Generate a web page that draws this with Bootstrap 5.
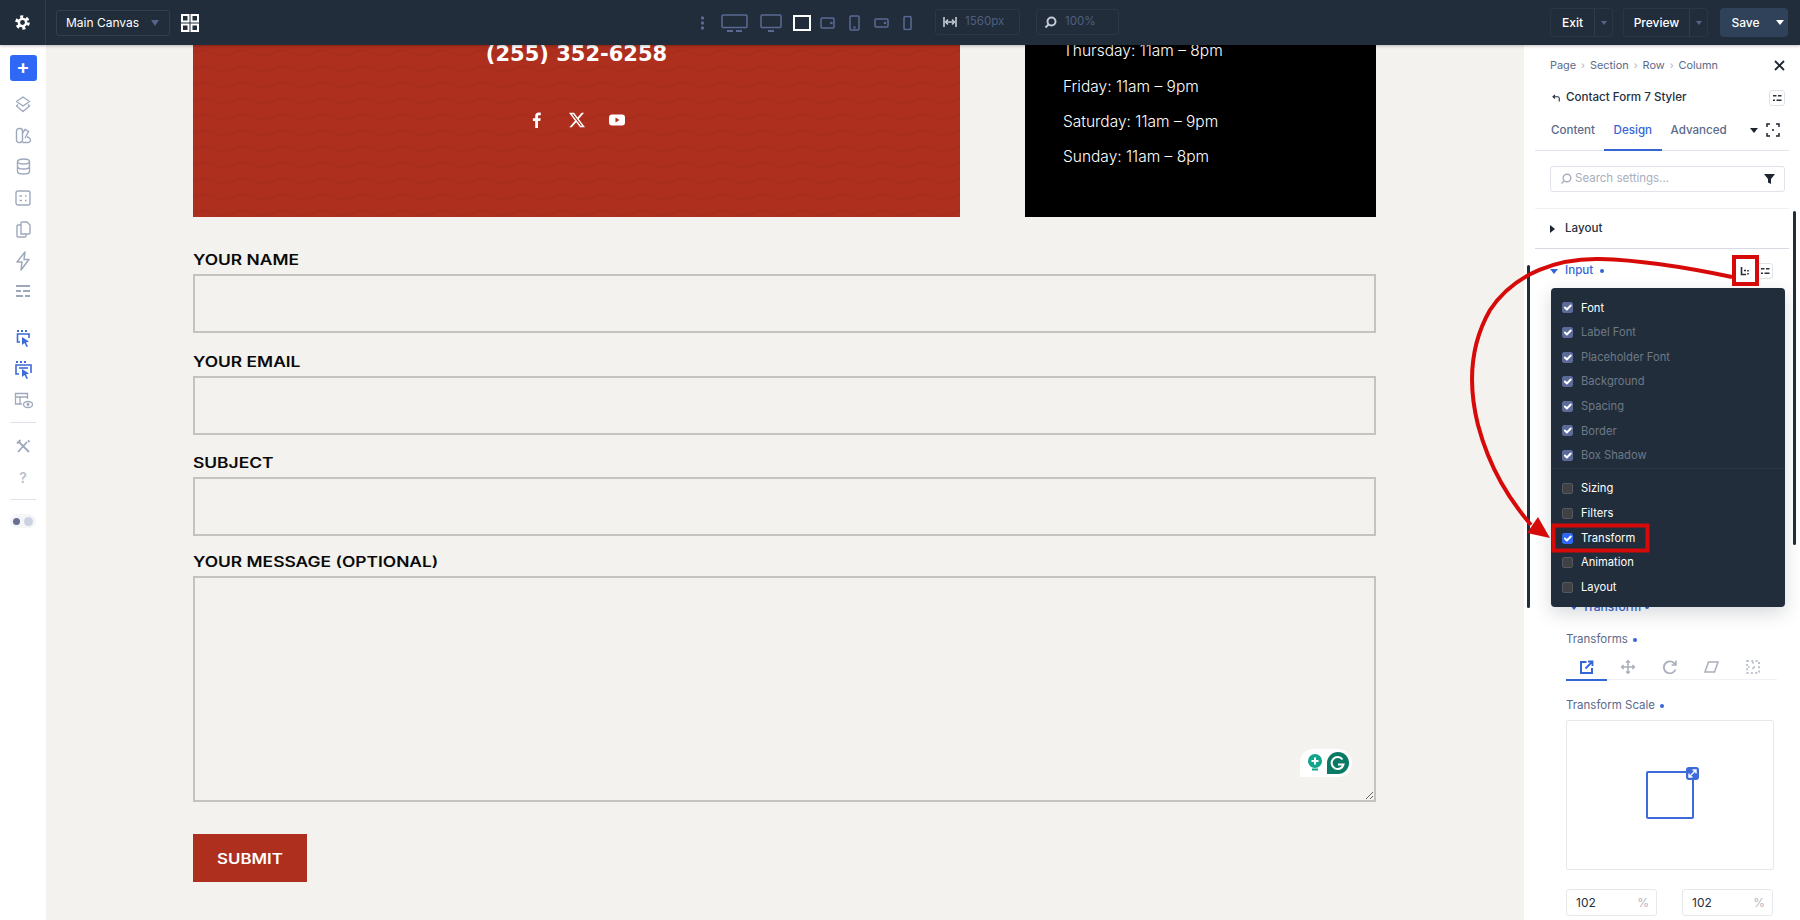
<!DOCTYPE html>
<html lang="en">
<head>
<meta charset="utf-8">
<title>Contact Form 7 Styler</title>
<link href="https://cdn.jsdelivr.net/npm/bootstrap@5.3.0/dist/css/bootstrap.min.css" rel="stylesheet">
<style>
html, body { height: 100%; overflow: hidden; }
body { font-family: Inter, "Liberation Sans", sans-serif; background: #f3f2ee; }
.app-shell { position: relative; width: 1800px; height: 920px; overflow: hidden; }

/* top bar */
.top-bar { height: 45px; background: #212d3a; color: #fff; font-size: 12px; box-shadow: 0 1px 3px rgba(0,0,0,.25); position: relative; z-index: 3; }
.gear-cell { width: 46px; height: 45px; border-right: 1px solid #2f3c4b; }
.canvas-pick { width: 114px; height: 26px; margin-left: 10px; border: 1px solid #333f4f; border-radius: 3px; padding: 0 10px 0 9px; }
.grid-ico { margin-left: 10px; }
.caret-dim { width: 0; height: 0; border-left: 4px solid transparent; border-right: 4px solid transparent; border-top: 6px solid #55648c; }
.caret-small { border-top-width: 4px; border-left-width: 3px; border-right-width: 3px; }
.caret-white { width: 0; height: 0; border-left: 4px solid transparent; border-right: 4px solid transparent; border-top: 5px solid #fff; }
.device-strip { position: absolute; left: 698px; top: 0; height: 45px; color: #5a6a94; }
.device-strip svg { position: absolute; top: 50%; transform: translateY(-50%); }
.stat-box { position: absolute; top: 9px; height: 26px; border: 1px solid #2c3846; border-radius: 3px; color: #4f5f7e; font-size: 11.6px; padding: 0 7px; gap: 8px; }
.stat-box svg { color: #c3cad6; }
.action-group { position: absolute; top: 8px; height: 29px; border: 1px solid #2a3644; border-radius: 3px; font-weight: 500; }
.action-main { height: 100%; display: flex; align-items: center; justify-content: center; border-right: 1px solid #2f3c4b; }
.action-arrow { width: 17px; height: 100%; display: flex; align-items: center; justify-content: center; }
.save-group { background: #30425a; border: 0; border-radius: 4px; }
.save-group .action-main { border: 0; }

/* left rail */
.rail-col { width: 46px; background: #fff; color: #9ea8bd; padding-top: 10px; }
.add-btn { width: 27px; height: 26px; margin: 0 auto 7.5px; background: #2e68f5; border-radius: 3px; color: #fff; font-size: 20px; font-weight: 600; line-height: 24px; text-align: center; }
.rail-item { height: 31.3px; display: flex; align-items: center; justify-content: center; }
.rail-blue { color: #3c6ad8; }
.rail-line { height: 1px; width: 26px; margin: 6px auto 7px; background: #dfe2e8; }
.rail-gap { height: 15px; }
.rail-help { font-size: 14px; font-weight: 600; color: #b8bfcc; }
.mode-pill { width: 26px; height: 14px; border-radius: 7px; background: #f4f5f8; margin: 14px auto 0 10px; gap: 4px; padding: 0 3px; }
.mode-dot { width: 7px; height: 7px; border-radius: 50%; background: #67718f; }
.mode-dot-light { width: 9px; height: 9px; border-radius: 50%; background: #ccd2e2; }

/* canvas */
.canvas-area { width: 1478px; padding-left: 147px; background: #f3f2ee; overflow: hidden; }
.hero-row { width: 1183px; height: 172px; gap: 65px; }
.hero-red { position: relative; width: 767px; background: #ae2f1e; color: #fff; overflow: hidden; }
.hero-waves { position: absolute; inset: 0; width: 100%; height: 100%; }
.hero-phone { position: relative; font-family: "DejaVu Sans", sans-serif; font-weight: 700; font-size: 21px; line-height: 18px; text-align: center; }
.hero-social { position: relative; margin-top: 49px; gap: 24px; }
.hero-hours { width: 351px; background: #000; color: #fff; padding-left: 38px; font-size: 15.500px; font-weight: 300; line-height: 24px; }
.hero-hours p { margin: 0 0 11px; }
.hero-hours p:first-child { line-height: 12px; margin-bottom: 18px; }
.contact-form { width: 1183px; padding-top: 34px; }
.field-label { display: block; height: 23px; margin: 0; font-family: Inter, sans-serif; font-weight: 600; font-size: 13.800px; line-height: 18px; color: #0a0a0a; transform: scaleX(1.260); transform-origin: left center; white-space: nowrap; }
.field-input { height: 59px; border: 2px solid #c4c3bd; border-radius: 0; background: #f3f2ee; margin-bottom: 19.500px; }
.field-input.form-control:focus { background: #f3f2ee; border-color: #c4c3bd; box-shadow: none; }
.field-tight { margin-bottom: 16.500px; }
textarea.field-input { height: 226px; margin-bottom: 32px; resize: both; }
.message-wrap { position: relative; }
.grammarly-pill { position: absolute; left: 1107px; top: 173px; width: 52px; height: 28px; background: #fff; border-radius: 13px 14px 14px 0; gap: 4px; padding: 0 2px 0 7px; }
.submit-btn { width: 114px; height: 48px; background: #ae2f1e; border: 0; border-radius: 0; color: #fff; padding: 0; }
.submit-btn span { display: inline-block; font-family: Inter, sans-serif; font-weight: 600; font-size: 13.800px; transform: scaleX(1.220); }
.submit-btn:hover { background: #ae2f1e; color: #fff; }

/* settings panel */
.settings-panel { position: relative; width: 276px; background: #fff; padding: 0 11px; overflow: hidden; font-size: 12px; color: #5b6a8a; }
.crumb-row { height: 41px; padding: 0 0 1px 15px; gap: 5px; font-size: 10.900px; }
.crumb-sep { color: #a9b1c2; font-size: 10px; }
.title-row { height: 24px; padding-left: 17px; font-size: 11.600px; font-weight: 500; color: #26303d; }
.back-ico { margin-right: 6px; }
.mini-btn { width: 16px; height: 16px; border: 1px solid #dfe2e8; border-radius: 3px; background: #fff; color: #26303d; }
.tab-row { height: 41px; border-bottom: 1px solid #dfe3ea; padding-left: 7px; font-weight: 500; font-size: 11.600px; position: relative; }
.tab-item { padding: 0 9px; height: 100%; display: flex; align-items: center; margin-top: 1px; }
.tab-on { color: #3566d6; position: relative; padding: 0 9.500px; }
.tab-on::after { content: ""; position: absolute; left: 0; right: 0; bottom: 0; height: 2px; background: #3566d6; }
.search-row { height: 26px; margin: 15px 4px 16px 15px; border: 1px solid #dfe3ea; border-radius: 3px; padding: 0 9px; color: #a8afbd; font-size: 11.500px; gap: 3px; }
.sect-row { height: 41px; border-top: 1px solid #eef0f3; border-bottom: 1px solid #d6dae1; padding-left: 15px; font-weight: 500; color: #26303d; font-size: 11.600px; gap: 10px; }
.sect-input { height: 44px; padding-left: 15px; color: #3566d6; font-weight: 500; font-size: 11.600px; gap: 7px; }
.tri-right { width: 0; height: 0; border-top: 4px solid transparent; border-bottom: 4px solid transparent; border-left: 5px solid #1c2530; }
.tri-down { width: 0; height: 0; border-left: 4px solid transparent; border-right: 4px solid transparent; border-top: 5px solid #3566d6; }
.blue-dot { width: 4px; height: 4px; border-radius: 50%; background: #3566d6; display: inline-block; }
.hidden-fill { height: 303px; }
.sub-sect { height: 22px; padding-left: 35px; color: #3566d6; font-weight: 500; gap: 4px; }
.opt-label { height: 30px; padding: 12px 0 0 31px; line-height: 18px; gap: 5px; font-size: 11.500px; }
.opt-label .blue-dot { margin-top: 8px; }
.opt-scale { padding-top: 16px; height: 39px; }
.icon-tabs { margin: 5px 12px 0 31px; height: 27px; border-bottom: 1px solid #eef0f3; color: #a9afbb; }
.icon-cell { width: 41.600px; height: 27px; display: flex; align-items: center; justify-content: center; }
.icon-cell-on { color: #3566d6; position: relative; }
.icon-cell-on::after { content: ""; position: absolute; left: 0; right: 1px; bottom: -1px; height: 2px; background: #3566d6; }
.scale-box { position: relative; height: 150px; margin: 1px 15px 0 31px; border: 1px solid #e6e8ec; border-radius: 2px; }
.scale-square { position: absolute; left: 79px; top: 50px; width: 48px; height: 48px; border: 2px solid #3c6ad8; border-radius: 2px; }
.scale-handle { position: absolute; right: -7px; top: -6px; width: 13px; height: 13px; background: #3c6ad8; border-radius: 3px; }
.num-row { margin: 19px 15px 0 31px; gap: 25px; }
.num-field { width: 91px; height: 27px; border: 1px solid #e6e8ec; border-radius: 3px; padding: 0 7px 0 9px; color: #26303d; }
.num-unit { color: #b0b6c2; }
.pick-menu { position: absolute; left: 27px; top: 243px; width: 234px; height: 319px; background: #212d3a; border-radius: 4px; padding: 7.700px 0 0 11px; box-shadow: 0 6px 18px rgba(33,45,58,.18); font-size: 11.200px; color: #fff; z-index: 2; }
.pick-item { height: 24.600px; display: flex; align-items: center; gap: 8px; }
.pick-item .form-check-input { width: 11px; height: 11px; margin: 0; border-radius: 2px; border: 1px solid #55585e; background-color: #3f4144; background-size: 13px; flex: none; }
.pick-item .form-check-input:checked { background-color: #5b6a98; border-color: #5b6a98; }
.pick-item .form-check-input.pick-active:checked { background-color: #2e68f5; border-color: #2e68f5; }
.pick-dim { color: #6e7987; }
.pick-line { height: 1px; background: #2b3745; margin: 0 0 7.700px -11px; }
.scroll-mark { position: absolute; width: 3px; background: #212d3a; border-radius: 2px; }
.scroll-left { left: 3px; top: 220px; height: 343px; }
.scroll-right { left: 269px; top: 166px; height: 334px; }
.note-layer { position: absolute; left: 0; top: 0; z-index: 5; pointer-events: none; }
</style>
</head>
<body>
<div class="app-shell d-flex flex-column">

  <!-- Top bar -->
  <div class="top-bar d-flex align-items-center flex-shrink-0">
    <div class="gear-cell d-flex align-items-center justify-content-center">
      <svg width="15" height="15" viewBox="0 0 16 16"><circle cx="8" cy="8" r="6.200" fill="none" stroke="#fff" stroke-width="3.200" stroke-dasharray="3.200 3.300"/><circle cx="8" cy="8" r="3.900" fill="none" stroke="#fff" stroke-width="2.600"/></svg>
    </div>
    <div class="canvas-pick d-flex align-items-center justify-content-between">
      <span>Main Canvas</span><span class="caret-dim"></span>
    </div>
    <svg class="grid-ico" width="20" height="20" viewBox="0 0 20 20" fill="none" stroke="#fff" stroke-width="2"><rect x="2" y="2" width="6.500" height="6.500"/><rect x="11.500" y="2" width="6.500" height="6.500"/><rect x="2" y="11.500" width="6.500" height="6.500"/><rect x="11.500" y="11.500" width="6.500" height="6.500"/></svg>

    <div class="device-strip">
      <svg style="left:2px" width="5" height="15" viewBox="0 0 5 15" fill="currentColor"><circle cx="2.500" cy="2.500" r="1.700"/><circle cx="2.500" cy="7.500" r="1.700"/><circle cx="2.500" cy="12.500" r="1.700"/></svg>
      <svg style="left:23px" width="27" height="18" viewBox="0 0 27 18" fill="none" stroke="currentColor" stroke-width="1.500"><rect x="1" y="1" width="25" height="12.500" rx="1"/><path d="M6 17h6M15 17h6" stroke-width="2"/></svg>
      <svg style="left:62px" width="22" height="18" viewBox="0 0 22 18" fill="none" stroke="currentColor" stroke-width="1.500"><rect x="1" y="1" width="20" height="12.500" rx="1"/><path d="M8 17h6" stroke-width="2"/></svg>
      <svg style="left:95px" width="18" height="16" viewBox="0 0 18 16" fill="none" stroke="#fff" stroke-width="2"><rect x="1" y="1" width="16" height="14"/></svg>
      <svg style="left:122px" width="15" height="12" viewBox="0 0 15 12" fill="none" stroke="currentColor" stroke-width="1.500"><rect x="1" y="1" width="13" height="10" rx="1"/><circle cx="11.400" cy="6" r=".6"/></svg>
      <svg style="left:151px" width="11" height="16" viewBox="0 0 11 16" fill="none" stroke="currentColor" stroke-width="1.500"><rect x="1" y="1" width="9" height="14" rx="1"/><circle cx="5.500" cy="12.500" r=".5"/></svg>
      <svg style="left:176px" width="15" height="10" viewBox="0 0 15 10" fill="none" stroke="currentColor" stroke-width="1.500"><rect x="1" y="1" width="13" height="8" rx="1"/><circle cx="11" cy="5" r=".6"/></svg>
      <svg style="left:205px" width="9" height="15" viewBox="0 0 9 15" fill="none" stroke="currentColor" stroke-width="1.500"><rect x="1" y="1" width="7" height="13" rx="1"/></svg>
    </div>

    <div class="stat-box d-flex align-items-center" style="left:935px;width:85px">
      <svg width="14" height="12" viewBox="0 0 14 12" fill="none" stroke="currentColor" stroke-width="1.600"><path d="M1 1v10M13 1v10M3 6h8"/><path d="M5 3.500 2.600 6 5 8.500M9 3.500 11.400 6 9 8.500"/></svg>
      <span>1560px</span>
    </div>
    <div class="stat-box d-flex align-items-center" style="left:1036px;width:83px">
      <svg width="13" height="13" viewBox="0 0 13 13" fill="none" stroke="currentColor" stroke-width="2"><circle cx="7.500" cy="5.500" r="4"/><path d="M4.500 8.500 1.500 11.500"/></svg>
      <span>100%</span>
    </div>

    <div class="action-group d-flex" style="left:1550px;width:63px">
      <span class="action-main flex-grow-1">Exit</span>
      <span class="action-arrow"><span class="caret-dim caret-small"></span></span>
    </div>
    <div class="action-group d-flex" style="left:1623px;width:85px">
      <span class="action-main flex-grow-1">Preview</span>
      <span class="action-arrow"><span class="caret-dim caret-small"></span></span>
    </div>
    <div class="action-group save-group d-flex" style="left:1720px;width:68px">
      <span class="action-main flex-grow-1">Save</span>
      <span class="action-arrow"><span class="caret-white"></span></span>
    </div>
  </div>

  <div class="d-flex flex-grow-1" style="min-height:0">

    <!-- Left rail -->
    <div class="rail-col flex-shrink-0">
      <div class="add-btn">+</div>
      <div class="rail-item"><svg width="16" height="17" viewBox="0 0 16 17" fill="none" stroke="currentColor" stroke-width="1.400" stroke-linejoin="round"><path d="M8 1 14.500 5.500 8 10 1.500 5.500z"/><path d="M3 8.500 1.500 10 8 15.500 14.500 10 13 8.500"/></svg></div>
      <div class="rail-item"><svg width="17" height="17" viewBox="0 0 17 17" fill="none" stroke="currentColor" stroke-width="1.400"><rect x="1.500" y="1.500" width="6" height="14" rx="2.500"/><path d="M7.500 6 10 2.500l3.500 2-3.500 6.500"/><path d="M7.500 15.500H13a2.500 2.500 0 0 0 2.500-2.500c0-1.500-2-3-3.500-3"/></svg></div>
      <div class="rail-item"><svg width="15" height="17" viewBox="0 0 15 17" fill="none" stroke="currentColor" stroke-width="1.400"><ellipse cx="7.500" cy="3.500" rx="6" ry="2.500"/><path d="M1.500 3.500v10c0 1.400 2.700 2.500 6 2.500s6-1.100 6-2.500v-10M1.500 8.500c0 1.400 2.700 2.500 6 2.500s6-1.100 6-2.500"/></svg></div>
      <div class="rail-item"><svg width="16" height="16" viewBox="0 0 16 16" fill="none" stroke="currentColor" stroke-width="1.400"><rect x="1" y="1" width="14" height="14" rx="2"/><path d="M4.500 6h2.500M4.500 10.500h2.500M10 6h1.500M10 10.500h1.500"/></svg></div>
      <div class="rail-item"><svg width="15" height="17" viewBox="0 0 15 17" fill="none" stroke="currentColor" stroke-width="1.400"><path d="M5 3V2a1 1 0 0 1 1-1h5l3 3v8a1 1 0 0 1-1 1H5z"/><path d="M5 4H2a1 1 0 0 0-1 1v10a1 1 0 0 0 1 1h7a1 1 0 0 0 1-1v-2"/></svg></div>
      <div class="rail-item"><svg width="14" height="20" viewBox="0 0 14 20" fill="none" stroke="currentColor" stroke-width="1.500" stroke-linejoin="round"><path d="M9 1 1 11h5l-1 8 8-10.500H8z"/></svg></div>
      <div class="rail-item"><svg width="14" height="13" viewBox="0 0 14 13" fill="currentColor"><rect width="14" height="2"/><rect y="5" width="5" height="2"/><rect x="7" y="5" width="7" height="2"/><rect y="10" width="7" height="2"/><rect x="9" y="10" width="5" height="2"/></svg></div>
      <div class="rail-gap"></div>
      <div class="rail-item rail-blue"><svg width="15" height="19" viewBox="0 0 15 19" fill="none" stroke="currentColor" stroke-width="1.600"><path d="M1 2h2M5 2h2M9 2h2" stroke-width="2"/><path d="M4 13H1.500V5h11.500v4"/><path d="M6 8l7 4.500-3 1 2 4-1.500.5-2-4-2.500 2z" fill="currentColor" stroke="none"/></svg></div>
      <div class="rail-item rail-blue"><svg width="17" height="19" viewBox="0 0 17 19" fill="none" stroke="currentColor" stroke-width="1.600"><path d="M1 2h2M5 2h2M9 2h2" stroke-width="2"/><path d="M4 14H1V5h15v8"/><path d="M4 8h9"/><path d="M7 9l7 4.500-3 1 2 4-1.500.5-2-4-2.500 2z" fill="currentColor" stroke="none"/></svg></div>
      <div class="rail-item"><svg width="19" height="17" viewBox="0 0 19 17" fill="none" stroke="currentColor" stroke-width="1.300"><path d="M8 12H1.500V1.500h12V7M1.500 5h12M6 5v7"/><ellipse cx="14" cy="12.500" rx="4.500" ry="3"/><circle cx="14" cy="12.500" r=".8" fill="currentColor"/></svg></div>
      <div class="rail-line"></div>
      <div class="rail-item"><svg width="15" height="15" viewBox="0 0 15 15" fill="none" stroke="currentColor" stroke-width="1.800"><path d="M2 13 11 3M12 1.500l1.500 1.500M13 13 3 3M1 4.500 4.500 1"/></svg></div>
      <div class="rail-item rail-help">?</div>
      <div class="rail-line"></div>
      <div class="mode-pill d-flex align-items-center"><span class="mode-dot"></span><span class="mode-dot-light"></span></div>
    </div>

    <!-- Canvas -->
    <div class="canvas-area flex-shrink-0">
      <div class="hero-row d-flex">
        <div class="hero-red d-flex flex-column align-items-center">
          <svg class="hero-waves" aria-hidden="true"><defs><pattern id="waves" width="40" height="16" patternUnits="userSpaceOnUse"><path d="M0 8q10-5 20 0t20 0" fill="none" stroke="#a82d1c" stroke-width="2.500"/></pattern></defs><rect width="100%" height="100%" fill="url(#waves)"/></svg>
          <div class="hero-phone">(255) 352-6258</div>
          <div class="hero-social d-flex align-items-center">
            <svg width="16" height="16" viewBox="0 0 16 16" fill="#fff"><path d="M9 16V9h2.300l.4-2.800H9V4.500c0-.8.2-1.300 1.400-1.300h1.400V.7C11.500.7 10.700.6 9.700.6 7.600.6 6.200 1.900 6.200 4.200v2H3.900V9h2.300v7z"/></svg>
            <svg width="16" height="16" viewBox="0 0 16 16" fill="#fff"><path d="M12.600.75h2.454l-5.360 6.142L16 15.250h-4.937l-3.867-5.070-4.425 5.070H.316l5.733-6.570L0 .75h5.063l3.495 4.633L12.601.75Zm-.86 13.028h1.360L4.323 2.145H2.865z"/></svg>
            <svg width="16" height="16" viewBox="0 0 16 16"><rect y="2.500" width="16" height="11" rx="3" fill="#fff"/><path d="M6.500 5.500 10.500 8l-4 2.500z" fill="#ae2f1e"/></svg>
          </div>
        </div>
        <div class="hero-hours">
          <p>Thursday: 11am – 8pm</p>
          <p>Friday: 11am – 9pm</p>
          <p>Saturday: 11am – 9pm</p>
          <p>Sunday: 11am – 8pm</p>
        </div>
      </div>

      <form class="contact-form">
        <label class="field-label" for="fName">YOUR NAME</label>
        <input id="fName" type="text" class="form-control field-input">
        <label class="field-label" for="fMail">YOUR EMAIL</label>
        <input id="fMail" type="text" class="form-control field-input">
        <label class="field-label" for="fSubject">SUBJECT</label>
        <input id="fSubject" type="text" class="form-control field-input field-tight">
        <label class="field-label" for="fMsg">YOUR MESSAGE (OPTIONAL)</label>
        <div class="message-wrap">
          <textarea id="fMsg" class="form-control field-input d-block"></textarea>
          <div class="grammarly-pill d-flex align-items-center">
            <svg width="16" height="18" viewBox="0 0 16 18"><circle cx="8" cy="7" r="7" fill="#12a58c"/><path d="M8 3.500v7M4.500 7h7" stroke="#fff" stroke-width="2"/><path d="M5 15.500h6" stroke="#12a58c" stroke-width="2"/></svg>
            <svg width="22" height="22" viewBox="0 0 22 22"><path d="M11 0a11 11 0 0 1 0 22H0V11A11 11 0 0 1 11 0z" fill="#0b7a64"/><path d="M15.500 7.500a6 6 0 1 0 1 5H11" fill="none" stroke="#fff" stroke-width="2"/></svg>
          </div>
        </div>
        <button type="button" class="btn submit-btn"><span>SUBMIT</span></button>
      </form>
    </div>

    <!-- Settings panel -->
    <div class="settings-panel flex-shrink-0">
      <div class="crumb-row d-flex align-items-center">
        <span>Page</span><span class="crumb-sep">›</span><span>Section</span><span class="crumb-sep">›</span><span>Row</span><span class="crumb-sep">›</span><span>Column</span>
        <svg class="ms-auto me-1" width="11" height="11" viewBox="0 0 11 11" stroke="#1c2530" stroke-width="1.800"><path d="M1 1l9 9M10 1l-9 9"/></svg>
      </div>
      <div class="title-row d-flex align-items-center">
        <svg class="back-ico" width="8" height="8" viewBox="0 0 8 8" fill="none" stroke="#26303d" stroke-width="1.100"><path d="M3 .8 1 2.800 3 4.500M1 2.800h4.500a1.800 1.800 0 0 1 1.800 1.800V7.500"/></svg>
        <span>Contact Form 7 Styler</span>
        <span class="mini-btn ms-auto me-1 d-flex align-items-center justify-content-center"><svg width="9" height="8" viewBox="0 0 9 8" fill="currentColor"><rect width="3.500" height="1.500" y="1"/><rect x="5" y="1" width="3.500" height="1.500"/><rect y="5.500" width="2" height="1.500"/><rect x="3.500" y="5.500" width="5" height="1.500"/></svg></span>
      </div>
      <div class="tab-row d-flex align-items-center">
        <span class="tab-item">Content</span>
        <span class="tab-item tab-on">Design</span>
        <span class="tab-item">Advanced</span>
        <span class="caret-white ms-auto" style="border-top-color:#1c2530"></span>
        <svg class="ms-2" style="margin-right:9px" width="14" height="14" viewBox="0 0 14 14" fill="none" stroke="#1c2530" stroke-width="1.500"><path d="M1 4V1h3M10 1h3v3M13 10v3h-3M4 13H1v-3M6 7h2"/></svg>
      </div>
      <div class="search-row d-flex align-items-center">
        <svg width="12" height="12" viewBox="0 0 12 12" fill="none" stroke="#a8afbd" stroke-width="1.400"><circle cx="7" cy="5" r="3.800"/><path d="M4 8 1.500 10.500"/></svg>
        <span>Search settings...</span>
        <svg class="ms-auto" width="11" height="10" viewBox="0 0 11 10" fill="#1c2530"><path d="M0 0h11L7 5v5L4 8.500V5z"/></svg>
      </div>
      <div class="sect-row d-flex align-items-center"><span class="tri-right"></span><span>Layout</span></div>
      <div class="sect-input d-flex align-items-center">
        <span class="tri-down"></span><span>Input</span><span class="blue-dot"></span>
        <span class="mini-btn ms-auto d-flex align-items-center justify-content-center" style="border-color:#fff"><svg width="10" height="9" viewBox="0 0 10 9" fill="none" stroke="#26303d" stroke-width="1.600"><path d="M2.500 0v7.500H7M5 3.500h2M9 3v1.500M9 6v1.500"/></svg></span>
        <span class="mini-btn d-flex align-items-center justify-content-center" style="margin:0 16px 0 -2px"><svg width="9" height="8" viewBox="0 0 9 8" fill="currentColor"><rect width="3.500" height="1.500" y="1"/><rect x="5" y="1" width="3.500" height="1.500"/><rect y="5.500" width="2" height="1.500"/><rect x="3.500" y="5.500" width="5" height="1.500"/></svg></span>
      </div>
      <div class="hidden-fill"></div>
      <div class="sub-sect d-flex align-items-center"><span class="tri-down"></span><span>Transform</span><span class="blue-dot"></span></div>
      <div class="opt-label d-flex align-items-start"><span>Transforms</span><span class="blue-dot"></span></div>
      <div class="icon-tabs d-flex">
        <span class="icon-cell icon-cell-on"><svg width="14" height="14" viewBox="0 0 14 14" fill="none" stroke="currentColor" stroke-width="2"><path d="M6.500 2H1v11h11V8"/><path d="M5.500 8.500 12 2M8 1.500h4.500V6" stroke-width="1.800"/></svg></span>
        <span class="icon-cell"><svg width="14" height="14" viewBox="0 0 14 14" fill="none" stroke="currentColor" stroke-width="1.500"><path d="M7 0v14M0 7h14M5 2.500 7 .8l2 1.700M5 11.500l2 1.700 2-1.700M2.500 5 .8 7l1.700 2M11.500 5l1.700 2-1.700 2"/></svg></span>
        <span class="icon-cell"><svg width="14" height="14" viewBox="0 0 14 14" fill="none" stroke="currentColor" stroke-width="1.800"><path d="M12.500 9.500A6 6 0 1 1 11 3l1.500 1.500"/><path d="M13 .5v4.500H8.500" stroke-width="1.600"/></svg></span>
        <span class="icon-cell"><svg width="15" height="12" viewBox="0 0 15 12" fill="none" stroke="currentColor" stroke-width="1.500"><path d="M4.500 1H14l-3.500 10H1z"/></svg></span>
        <span class="icon-cell"><svg width="14" height="14" viewBox="0 0 14 14" fill="none" stroke="currentColor" stroke-width="1.500" stroke-dasharray="2 2.300"><rect x="1" y="1" width="12" height="12"/><path d="M7 2v11M2 7h11" stroke-dasharray="1.500 4"/></svg></span>
      </div>
      <div class="opt-label opt-scale d-flex align-items-start"><span>Transform Scale</span><span class="blue-dot"></span></div>
      <div class="scale-box">
        <div class="scale-square">
          <div class="scale-handle d-flex align-items-center justify-content-center"><svg width="9" height="9" viewBox="0 0 9 9" fill="none" stroke="#fff" stroke-width="1.400"><path d="M1.500 7.500 7.500 1.500M4.500 1h3.500v3.500M1 4.500V8h3.500"/></svg></div>
        </div>
      </div>
      <div class="num-row d-flex">
        <div class="num-field d-flex align-items-center justify-content-between"><span>102</span><span class="num-unit">%</span></div>
        <div class="num-field d-flex align-items-center justify-content-between"><span>102</span><span class="num-unit">%</span></div>
      </div>

      <!-- checkbox menu over the panel -->
      <div class="pick-menu">
        <div class="pick-item"><input class="form-check-input" type="checkbox" checked aria-label="Font"><span>Font</span></div>
        <div class="pick-item pick-dim"><input class="form-check-input" type="checkbox" checked aria-label="Label Font"><span>Label Font</span></div>
        <div class="pick-item pick-dim"><input class="form-check-input" type="checkbox" checked aria-label="Placeholder Font"><span>Placeholder Font</span></div>
        <div class="pick-item pick-dim"><input class="form-check-input" type="checkbox" checked aria-label="Background"><span>Background</span></div>
        <div class="pick-item pick-dim"><input class="form-check-input" type="checkbox" checked aria-label="Spacing"><span>Spacing</span></div>
        <div class="pick-item pick-dim"><input class="form-check-input" type="checkbox" checked aria-label="Border"><span>Border</span></div>
        <div class="pick-item pick-dim"><input class="form-check-input" type="checkbox" checked aria-label="Box Shadow"><span>Box Shadow</span></div>
        <div class="pick-line"></div>
        <div class="pick-item"><input class="form-check-input" type="checkbox" aria-label="Sizing"><span>Sizing</span></div>
        <div class="pick-item"><input class="form-check-input" type="checkbox" aria-label="Filters"><span>Filters</span></div>
        <div class="pick-item"><input class="form-check-input pick-active" type="checkbox" checked aria-label="Transform"><span>Transform</span></div>
        <div class="pick-item"><input class="form-check-input" type="checkbox" aria-label="Animation"><span>Animation</span></div>
        <div class="pick-item"><input class="form-check-input" type="checkbox" aria-label="Layout"><span>Layout</span></div>
      </div>
      <div class="scroll-mark scroll-left"></div>
      <div class="scroll-mark scroll-right"></div>
    </div>
  </div>

  <!-- red annotation drawn over the screenshot -->
  <svg class="note-layer" width="1800" height="920" fill="none" stroke="#d70a0a">
    <rect x="1734" y="257" width="23" height="27" stroke-width="4"/>
    <rect x="1553.500" y="525.500" width="94" height="25" stroke-width="4"/>
    <path d="M1732 277C1680 266 1640 260 1600 259C1560 258 1515 272 1490 310C1470 345 1468 385 1478 425C1490 470 1510 500 1531 525" stroke-width="4"/>
    <path d="M1550 538 1527 533 1538 517z" fill="#d70a0a" stroke="none"/>
  </svg>
</div>
<script src="https://cdn.jsdelivr.net/npm/bootstrap@5.3.0/dist/js/bootstrap.bundle.min.js"></script>
</body>
</html>
